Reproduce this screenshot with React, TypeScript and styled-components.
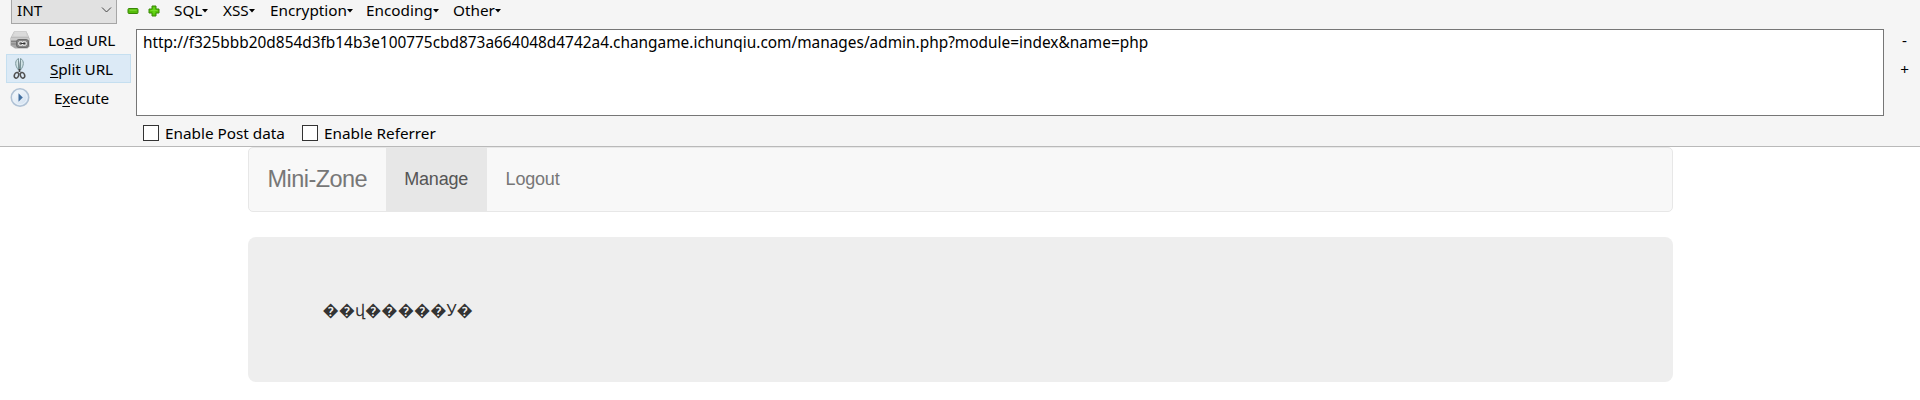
import React from 'react';
import styled, { createGlobalStyle } from 'styled-components';

const GlobalStyle = createGlobalStyle`
  *, *::before, *::after { box-sizing: border-box; }
  body { margin: 0; background: #fff; overflow: hidden; }
`;

const HackBar = styled.section`
  height: 147px;
  background: #f5f5f5;
  border-bottom: 1px solid #b9b9b9;
  color: #000;
  font: 15.3px/20px "Noto Sans", sans-serif;
  white-space: nowrap;
`;

const MenuRow = styled.div`
  display: flex;
  align-items: flex-start;
  height: 29px;
  padding-left: 11px;
`;

const TypeSelect = styled.div`
  display: flex;
  align-items: flex-start;
  justify-content: space-between;
  width: 106px;
  height: 24px;
  padding: 0 4px 0 5px;
  background: #e1e1e1;
  border: 1px solid #a6a6a6;
  border-top: 0;
  svg { margin-top: 6px; }
`;

const SignIcons = styled.div`
  display: flex;
  gap: 9px;
  margin: 4px 14px 0 10px;
`;

const MenuItem = styled.span<{ $width: number }>`
  display: flex;
  align-items: center;
  width: ${(p) => p.$width}px;
  height: 20px;
  svg { flex: none; margin-top: 1px; }
`;

const Workspace = styled.div`
  display: flex;
`;

const Actions = styled.div`
  width: 125px;
  margin: -4px 5px 0 6px;
`;

const Action = styled.div<{ $active?: boolean }>`
  display: flex;
  align-items: center;
  height: 29px;
  padding-left: 3px;
  border: 1px solid ${(p) => (p.$active ? '#c5dff0' : 'transparent')};
  background: ${(p) => (p.$active ? '#dceaf6' : 'transparent')};
  svg { flex: none; }
`;

const ActionLabel = styled.span`
  flex: 1;
  padding-left: 2px;
  text-align: center;
  letter-spacing: -0.1px;
  u { text-underline-offset: 2px; text-decoration-thickness: 1px; }
`;

const Editor = styled.div`
  width: 1748px;
`;

const UrlBox = styled.div`
  height: 87px;
  padding: 3px 6px;
  background: #fff;
  border: 1px solid #767676;
  font-size: 15.4px;
`;

const Options = styled.div`
  display: flex;
  padding: 7px 7px 0;
`;

const Option = styled.label<{ $width: number }>`
  display: flex;
  align-items: center;
  gap: 6px;
  width: ${(p) => p.$width}px;
`;

const Box = styled.span`
  width: 16px;
  height: 16px;
  background: #fff;
  border: 1px solid #333;
`;

const Resizers = styled.div`
  display: flex;
  flex-direction: column;
  align-items: center;
  flex: 1;
  padding: 1px 0 0 5px;
  gap: 9px;
`;

const Page = styled.main`
  width: 1425px;
  margin: 0 auto;
  font-family: "Liberation Sans", Arial, sans-serif;
`;

const Navbar = styled.nav`
  display: flex;
  height: 65px;
  background: #f8f8f8;
  border: 1px solid #e7e7e7;
  border-radius: 5px;
`;

const Brand = styled.a`
  width: 137px;
  padding: 19px 0 0 19px;
  color: #777;
  font-size: 23.5px;
  line-height: 25px;
  letter-spacing: -0.55px;
`;

const NavLink = styled.a<{ $active?: boolean }>`
  padding: 19px 18.75px;
  color: ${(p) => (p.$active ? '#555' : '#777')};
  background: ${(p) => (p.$active ? '#e7e7e7' : 'transparent')};
  font-size: 18px;
  line-height: 25px;
  letter-spacing: -0.2px;
`;

const Jumbotron = styled.section`
  height: 145px;
  margin-top: 25px;
  padding: 61px 75px;
  background: #eee;
  border-radius: 8px;
  color: #333;
  font: 16.3px/25px "Noto Sans", sans-serif;
`;

const Chevron = () => (
  <svg width="11" height="8" viewBox="0 0 11 8" fill="none" stroke="#444">
    <path d="M1 1.5 5.5 6 10 1.5" />
  </svg>
);

const Caret = () => (
  <svg width="6" height="4" viewBox="0 0 6 4">
    <path d="M0 0h6L3 3.6z" />
  </svg>
);

const Minus = () => (
  <svg width="12" height="14" viewBox="0 0 12 14">
    <rect x="1" y="4.5" width="10" height="5" rx="1" fill="#56bd0b" stroke="#398707" />
    <path d="M2.5 6.2h7" stroke="#7fda35" />
  </svg>
);

const Plus = () => (
  <svg width="12" height="14" viewBox="0 0 12 14">
    <path d="M4 2h4v3h3v4H8v3H4V9H1V5h3z" fill="#56c808" stroke="#398707" strokeLinejoin="round" />
    <path d="M6 3.5v6M2.5 6.5h7" stroke="#75df28" />
  </svg>
);

const Drive = () => (
  <svg width="21" height="20" viewBox="0 0 21 20">
    <path d="M4 1.5h12.5l3 7v8l-2 2H5l-4.5-3V8z" fill="#a8a8a8" />
    <path d="M4 1.5h12.5l2.5 6H1z" fill="#cfcfcf" />
    <path d="M4.5 3h11.5M3.5 5h13" stroke="#e6e6e6" />
    <path d="M1 9h18" stroke="#eee" />
    <path d="M1 11.5h6M1 14h5" stroke="#818181" />
    <rect x="6.5" y="9.5" width="12" height="8" rx="2.5" fill="#858585" stroke="#6b6b6b" />
    <rect x="8.5" y="11.5" width="4.5" height="4" rx="2" fill="none" stroke="#eee" />
    <rect x="12" y="11.5" width="4.5" height="4" rx="2" fill="none" stroke="#eee" />
    <path d="M10.5 13.5h4.5" stroke="#333" />
  </svg>
);

const Scissors = () => (
  <svg width="21" height="24" viewBox="0 0 21 24" fill="none">
    <path d="M8.5 1.5C4.5 3.5 5 9 8.5 13zM10.5 1.5c4 2 3.500 7.500 0 11.500z" fill="#d1e3e6" stroke="#7b979c" />
    <path d="M8.5 4l1.3 9M10.5 4l-1.3 9" stroke="#78898c" strokeWidth="0.8" />
    <path d="M9.5 12v3" stroke="#444" strokeWidth="1.8" />
    <ellipse cx="6.5" cy="18.3" rx="2.1" ry="2.9" transform="rotate(20 6.5 18.3)" stroke="#505050" strokeWidth="1.5" />
    <ellipse cx="12.5" cy="18.3" rx="2.1" ry="2.9" transform="rotate(-20 12.5 18.3)" stroke="#505050" strokeWidth="1.5" />
  </svg>
);

const Play = () => (
  <svg width="21" height="21" viewBox="0 0 21 21">
    <defs>
      <linearGradient id="glass" x1="0" y1="0" x2="1" y2="1">
        <stop stopColor="#fff" />
        <stop offset="1" stopColor="#cbdcee" />
      </linearGradient>
    </defs>
    <circle cx="10" cy="10.5" r="8.7" fill="url(#glass)" stroke="#b0c2d5" strokeWidth="1.6" />
    <circle cx="10" cy="10.5" r="7" fill="none" stroke="#e9f2fa" />
    <path d="M8.500 6.200v8.600l4.300-4.300z" fill="#426f9f" />
  </svg>
);

export default function App() {
  return (
    <>
      <GlobalStyle />
      <HackBar>
        <MenuRow>
          <TypeSelect>INT<Chevron /></TypeSelect>
          <SignIcons><Minus /><Plus /></SignIcons>
          <MenuItem $width={49}>SQL<Caret /></MenuItem>
          <MenuItem $width={47}>XSS<Caret /></MenuItem>
          <MenuItem $width={96}>Encryption<Caret /></MenuItem>
          <MenuItem $width={87}>Encoding<Caret /></MenuItem>
          <MenuItem $width={60}>Other<Caret /></MenuItem>
        </MenuRow>
        <Workspace>
          <Actions>
            <Action><Drive /><ActionLabel>Lo<u>a</u>d URL</ActionLabel></Action>
            <Action $active><Scissors /><ActionLabel><u>S</u>plit URL</ActionLabel></Action>
            <Action><Play /><ActionLabel>E<u>x</u>ecute</ActionLabel></Action>
          </Actions>
          <Editor>
            <UrlBox>http://f325bbb20d854d3fb14b3e100775cbd873a664048d4742a4.changame.ichunqiu.com/manages/admin.php?module=index&amp;name=php</UrlBox>
            <Options>
              <Option $width={159}><Box />Enable Post data</Option>
              <Option $width={160}><Box />Enable Referrer</Option>
            </Options>
          </Editor>
          <Resizers><span>-</span><span>+</span></Resizers>
        </Workspace>
      </HackBar>
      <Page>
        <Navbar>
          <Brand>Mini-Zone</Brand>
          <NavLink $active>Manage</NavLink>
          <NavLink>Logout</NavLink>
        </Navbar>
        <Jumbotron>��վ�����У�</Jumbotron>
      </Page>
    </>
  );
}
